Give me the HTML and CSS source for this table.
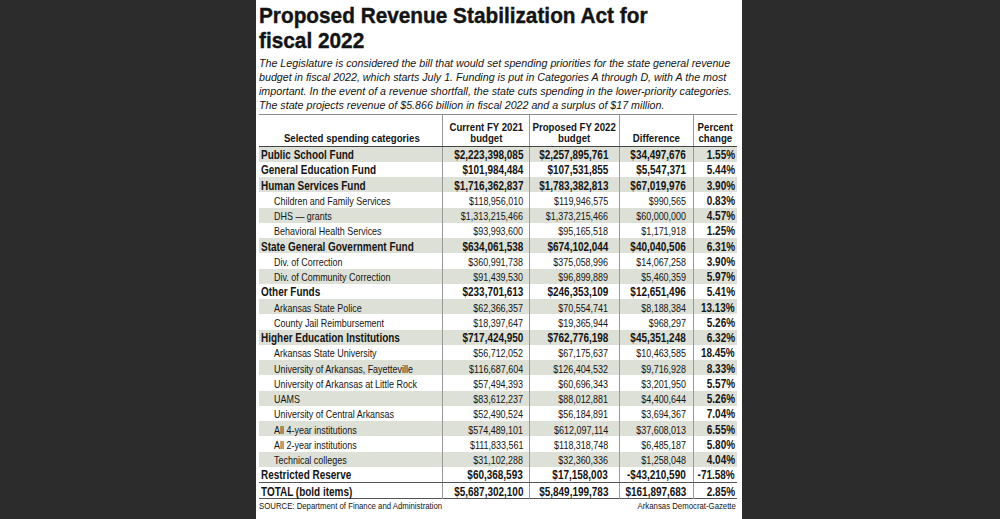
FILE: index.html
```html
<!DOCTYPE html>
<html>
<head>
<meta charset="utf-8">
<link rel="stylesheet" href="styles.css">
</head>
<body>
<div class="page">
  <h1 class="title">Proposed Revenue Stabilization Act for<br>fiscal 2022</h1>
  <p class="intro">The Legislature is considered the bill that would set spending priorities for the state general revenue<br>budget in fiscal 2022, which starts July 1. Funding is put in Categories A through D, with A the most<br>important. In the event of a revenue shortfall, the state cuts spending in the lower-priority categories.<br>The state projects revenue of $5.866 billion in fiscal 2022 and a surplus of $17 million.</p>
  <div class="table">
    <div class="row head">
      <div class="cell cat"><span>Selected spending categories</span></div>
      <div class="cell"><span>Current FY 2021<br>budget</span></div>
      <div class="cell"><span>Proposed FY 2022<br>budget</span></div>
      <div class="cell"><span>Difference</span></div>
      <div class="cell"><span>Percent<br>change</span></div>
    </div>
    <div class="row bold shade"><div class="cell cat"><span>Public School Fund</span></div><div class="cell c1"><span>$2,223,398,085</span></div><div class="cell c2"><span>$2,257,895,761</span></div><div class="cell c3"><span>$34,497,676</span></div><div class="cell c4"><span>1.55%</span></div></div>
    <div class="row bold"><div class="cell cat"><span>General Education Fund</span></div><div class="cell c1"><span>$101,984,484</span></div><div class="cell c2"><span>$107,531,855</span></div><div class="cell c3"><span>$5,547,371</span></div><div class="cell c4"><span>5.44%</span></div></div>
    <div class="row bold shade"><div class="cell cat"><span>Human Services Fund</span></div><div class="cell c1"><span>$1,716,362,837</span></div><div class="cell c2"><span>$1,783,382,813</span></div><div class="cell c3"><span>$67,019,976</span></div><div class="cell c4"><span>3.90%</span></div></div>
    <div class="row sub"><div class="cell cat"><span>Children and Family Services</span></div><div class="cell c1"><span>$118,956,010</span></div><div class="cell c2"><span>$119,946,575</span></div><div class="cell c3"><span>$990,565</span></div><div class="cell c4"><span>0.83%</span></div></div>
    <div class="row sub shade"><div class="cell cat"><span>DHS — grants</span></div><div class="cell c1"><span>$1,313,215,466</span></div><div class="cell c2"><span>$1,373,215,466</span></div><div class="cell c3"><span>$60,000,000</span></div><div class="cell c4"><span>4.57%</span></div></div>
    <div class="row sub"><div class="cell cat"><span>Behavioral Health Services</span></div><div class="cell c1"><span>$93,993,600</span></div><div class="cell c2"><span>$95,165,518</span></div><div class="cell c3"><span>$1,171,918</span></div><div class="cell c4"><span>1.25%</span></div></div>
    <div class="row bold shade"><div class="cell cat"><span>State General Government Fund</span></div><div class="cell c1"><span>$634,061,538</span></div><div class="cell c2"><span>$674,102,044</span></div><div class="cell c3"><span>$40,040,506</span></div><div class="cell c4"><span>6.31%</span></div></div>
    <div class="row sub"><div class="cell cat"><span>Div. of Correction</span></div><div class="cell c1"><span>$360,991,738</span></div><div class="cell c2"><span>$375,058,996</span></div><div class="cell c3"><span>$14,067,258</span></div><div class="cell c4"><span>3.90%</span></div></div>
    <div class="row sub shade"><div class="cell cat"><span>Div. of Community Correction</span></div><div class="cell c1"><span>$91,439,530</span></div><div class="cell c2"><span>$96,899,889</span></div><div class="cell c3"><span>$5,460,359</span></div><div class="cell c4"><span>5.97%</span></div></div>
    <div class="row bold"><div class="cell cat"><span>Other Funds</span></div><div class="cell c1"><span>$233,701,613</span></div><div class="cell c2"><span>$246,353,109</span></div><div class="cell c3"><span>$12,651,496</span></div><div class="cell c4"><span>5.41%</span></div></div>
    <div class="row sub shade"><div class="cell cat"><span>Arkansas State Police</span></div><div class="cell c1"><span>$62,366,357</span></div><div class="cell c2"><span>$70,554,741</span></div><div class="cell c3"><span>$8,188,384</span></div><div class="cell c4"><span>13.13%</span></div></div>
    <div class="row sub"><div class="cell cat"><span>County Jail Reimbursement</span></div><div class="cell c1"><span>$18,397,647</span></div><div class="cell c2"><span>$19,365,944</span></div><div class="cell c3"><span>$968,297</span></div><div class="cell c4"><span>5.26%</span></div></div>
    <div class="row bold shade"><div class="cell cat"><span>Higher Education Institutions</span></div><div class="cell c1"><span>$717,424,950</span></div><div class="cell c2"><span>$762,776,198</span></div><div class="cell c3"><span>$45,351,248</span></div><div class="cell c4"><span>6.32%</span></div></div>
    <div class="row sub"><div class="cell cat"><span>Arkansas State University</span></div><div class="cell c1"><span>$56,712,052</span></div><div class="cell c2"><span>$67,175,637</span></div><div class="cell c3"><span>$10,463,585</span></div><div class="cell c4"><span>18.45%</span></div></div>
    <div class="row sub shade"><div class="cell cat"><span>University of Arkansas, Fayetteville</span></div><div class="cell c1"><span>$116,687,604</span></div><div class="cell c2"><span>$126,404,532</span></div><div class="cell c3"><span>$9,716,928</span></div><div class="cell c4"><span>8.33%</span></div></div>
    <div class="row sub"><div class="cell cat"><span>University of Arkansas at Little Rock</span></div><div class="cell c1"><span>$57,494,393</span></div><div class="cell c2"><span>$60,696,343</span></div><div class="cell c3"><span>$3,201,950</span></div><div class="cell c4"><span>5.57%</span></div></div>
    <div class="row sub shade"><div class="cell cat"><span>UAMS</span></div><div class="cell c1"><span>$83,612,237</span></div><div class="cell c2"><span>$88,012,881</span></div><div class="cell c3"><span>$4,400,644</span></div><div class="cell c4"><span>5.26%</span></div></div>
    <div class="row sub"><div class="cell cat"><span>University of Central Arkansas</span></div><div class="cell c1"><span>$52,490,524</span></div><div class="cell c2"><span>$56,184,891</span></div><div class="cell c3"><span>$3,694,367</span></div><div class="cell c4"><span>7.04%</span></div></div>
    <div class="row sub shade"><div class="cell cat"><span>All 4-year institutions</span></div><div class="cell c1"><span>$574,489,101</span></div><div class="cell c2"><span>$612,097,114</span></div><div class="cell c3"><span>$37,608,013</span></div><div class="cell c4"><span>6.55%</span></div></div>
    <div class="row sub"><div class="cell cat"><span>All 2-year institutions</span></div><div class="cell c1"><span>$111,833,561</span></div><div class="cell c2"><span>$118,318,748</span></div><div class="cell c3"><span>$6,485,187</span></div><div class="cell c4"><span>5.80%</span></div></div>
    <div class="row sub shade"><div class="cell cat"><span>Technical colleges</span></div><div class="cell c1"><span>$31,102,288</span></div><div class="cell c2"><span>$32,360,336</span></div><div class="cell c3"><span>$1,258,048</span></div><div class="cell c4"><span>4.04%</span></div></div>
    <div class="row bold"><div class="cell cat"><span>Restricted Reserve</span></div><div class="cell c1"><span>$60,368,593</span></div><div class="cell c2"><span>$17,158,003</span></div><div class="cell c3"><span>-$43,210,590</span></div><div class="cell c4"><span>-71.58%</span></div></div>
    <div class="row bold total"><div class="cell cat"><span>TOTAL (bold items)</span></div><div class="cell c1"><span>$5,687,302,100</span></div><div class="cell c2"><span>$5,849,199,783</span></div><div class="cell c3"><span>$161,897,683</span></div><div class="cell c4"><span>2.85%</span></div></div>
  </div>
  <div class="foot"><span class="src">SOURCE: Department of Finance and Administration</span><span class="credit">Arkansas Democrat-Gazette</span></div>
</div>
</body>
</html>
```

FILE: styles.css
```css
html, body {
  margin: 0;
  padding: 0;
}
body {
  background: #2c2c2c;
  height: 519px;
  overflow: hidden;
  font-family: "Liberation Sans", Arial, sans-serif;
  color: #141414;
}
.page {
  width: 486px;
  height: 519px;
  margin-left: 256px;
  background: #fff;
  box-sizing: border-box;
  padding: 0 5px 0 3px;
  display: flex;
  flex-direction: column;
}
.title {
  margin: 0;
  padding-top: 3px;
  font-size: 22px;
  line-height: 25px;
  font-weight: bold;
  white-space: nowrap;
  -webkit-text-stroke: 0.4px #141414;
  transform: scaleX(0.945);
  transform-origin: left top;
}
.intro {
  margin: 2.5px 0 0 0;
  font-size: 11.8px;
  line-height: 14px;
  font-style: italic;
  white-space: nowrap;
  transform: scaleX(0.905);
  transform-origin: left top;
}
.table {
  margin-top: 2px;
  border-top: 1px solid #8a8a8a;
  border-bottom: 1px solid #555;
}
.row {
  display: grid;
  grid-template-columns: 183px 87px 90px 74px 44px;
  height: 15.26px;
}
.row.shade {
  background: #dde0d6;
}
.cell {
  border-left: 1px solid #999;
  display: flex;
  align-items: center;
  justify-content: flex-end;
  white-space: nowrap;
  font-size: 10.8px;
  padding-top: 1.5px;
  min-width: 0;
}
.cell > span {
  display: inline-block;
  flex: none;
  transform: scaleX(0.83);
  transform-origin: right center;
}
.cell.cat {
  border-left: none;
  justify-content: flex-start;
  padding-left: 2px;
}
.cell.cat > span {
  transform-origin: left center;
}
.sub .cell.cat {
  padding-left: 15px;
}
.c1 { padding-right: 6px; }
.c2 { padding-right: 11px; }
.c3 { padding-right: 7px; }
.c4 { padding-right: 2px; font-weight: bold; font-size: 12px; }
.bold .cell {
  font-weight: bold;
  font-size: 12px;
}
.head {
  height: 31px;
  border-bottom: 1px solid #444;
}
.head .cell {
  font-weight: bold;
  font-size: 11.6px;
  line-height: 11px;
  justify-content: center;
  align-items: flex-end;
  text-align: center;
  padding-top: 0;
  padding-bottom: 3px;
}
.head .cell > span {
  transform-origin: center bottom;
}
.head .cell.cat {
  justify-content: center;
}
.total {
  border-top: 1px solid #555;
}
.foot {
  display: flex;
  justify-content: space-between;
  font-size: 9.5px;
  line-height: 11px;
  margin-top: 1px;
  padding-right: 1px;
  white-space: nowrap;
}
.foot > span {
  display: inline-block;
  transform: scaleX(0.82);
}
.foot .src {
  transform-origin: left center;
}
.foot .credit {
  transform-origin: right center;
}
```
